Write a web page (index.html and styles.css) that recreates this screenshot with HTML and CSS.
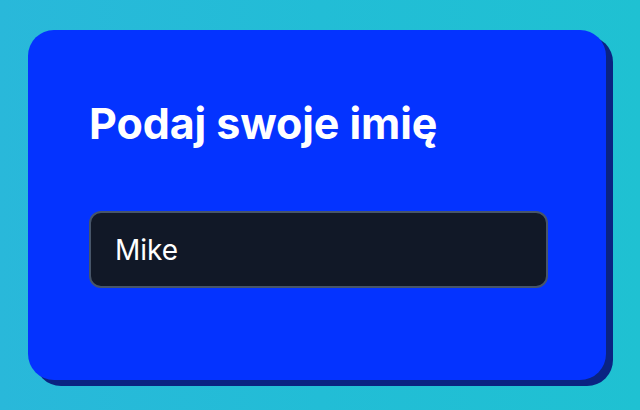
FILE: index.html
```html
<!DOCTYPE html>
<html lang="pl">
<head>
<meta charset="utf-8">
<link rel="stylesheet" href="styles.css">
</head>
<body>
<div class="page">
  <div class="card">
    <h1 class="title">Podaj swoje imię</h1>
    <input class="name-input" type="text" value="Mike">
  </div>
</div>
</body>
</html>
```
FILE: styles.css
```css
html, body {
  margin: 0;
  padding: 0;
}
body {
  width: 640px;
  height: 410px;
  overflow: hidden;
  background: linear-gradient(90deg, #29b8da 0%, #22bdd6 50%, #1fc1d2 100%);
  font-family: Inter, "Noto Sans", sans-serif;
}
.page {
  display: flex;
  padding: 30px 0 0 28px;
}
.card {
  box-sizing: border-box;
  width: 578px;
  height: 350px;
  padding: 69px 58px 0 61px;
  background: #0433ff;
  border-radius: 26px;
  box-shadow: 7px 6px 0 #0a2382;
  display: flex;
  flex-direction: column;
  gap: 64px;
}
.title {
  margin: 0;
  color: #ffffff;
  font-size: 43px;
  line-height: 48px;
  font-weight: 700;
  letter-spacing: -0.1px;
}
.name-input {
  box-sizing: border-box;
  width: 459px;
  height: 77px;
  margin: 0;
  padding: 0 24px;
  border: 2px solid #475569;
  border-radius: 12px;
  background: #111827;
  color: #ffffff;
  font-family: Inter, "Noto Sans", sans-serif;
  font-size: 28px;
  outline: none;
}
```
